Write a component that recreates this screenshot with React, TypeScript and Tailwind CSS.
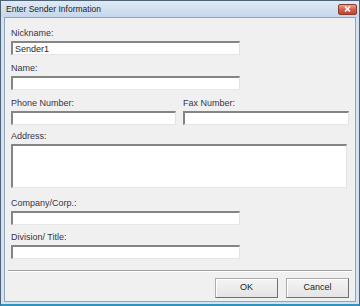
import React from "react";

const font = { fontFamily: '"Liberation Sans", Arial, sans-serif' };

function Field({ w, h = 14, value }: { w: string; h?: number; value?: string }) {
  return (
    <div
      className={`${w} bg-white border-t-2 border-l-2 border-r border-b border-t-[#858585] border-l-[#858585] border-r-[#e3e3e3] border-b-[#e6e6e6] flex items-center pl-[2px] text-[9px] leading-[10px] text-[#2a2a2a]`}
      style={{ height: h }}
    >
      {value}
    </div>
  );
}

function Label({ children }: { children: React.ReactNode }) {
  return <div className="h-[11px] leading-[11px] text-[9px] text-[#3a3346] mb-[2px]">{children}</div>;
}

function Btn({ children }: { children: React.ReactNode }) {
  return (
    <div className="w-[63px] h-[20px] flex items-center justify-center text-[9px] text-[#222] bg-gradient-to-b from-[#f4f4f4] to-[#e4e4e4] border border-[#acacac] border-r-[#6f6f6f] border-b-[#6f6f6f] shadow-[inset_1px_1px_0_#ffffff]">
      {children}
    </div>
  );
}

export default function App() {
  return (
    <div
      className="w-[360px] h-[306px] flex flex-col bg-[#d3e2f1] border border-[#4f6275] border-b-2 border-b-[#2f93bd]"
      style={font}
    >
      <div className="h-[16px] flex items-center justify-between pl-[5px] pr-[2px] bg-gradient-to-b from-[#dfeaf5] to-[#c4d7eb]">
        <span className="text-[8.5px] text-[#1f1f1f] leading-[10px]">Enter Sender Information</span>
        <div className="w-[19px] h-[11px] rounded-[2px] border border-[#8b3b2f] bg-gradient-to-b from-[#e9a08f] via-[#d2604a] to-[#c0452f] flex items-center justify-center">
          <svg width="7" height="6" viewBox="0 0 7 6">
            <path d="M1 0.5 L6 5.5 M6 0.5 L1 5.5" stroke="#ffffff" strokeWidth="1.6" />
          </svg>
        </div>
      </div>
      <div className="flex-1 mx-[3px] mb-[2px] bg-[#f0f0f0] border border-[#90a5ba] flex flex-col px-[6px]">
        <div className="mt-[10px]">
          <Label>Nickname:</Label>
          <Field w="w-[229px]" value="Sender1" />
        </div>
        <div className="mt-[8px]">
          <Label>Name:</Label>
          <Field w="w-[229px]" />
        </div>
        <div className="mt-[8px] flex gap-[7px]">
          <div>
            <Label>Phone Number:</Label>
            <Field w="w-[165px]" />
          </div>
          <div>
            <Label>Fax Number:</Label>
            <Field w="w-[166px]" />
          </div>
        </div>
        <div className="mt-[6px]">
          <Label>Address:</Label>
          <Field w="w-[336px]" h={44} />
        </div>
        <div className="mt-[10px]">
          <Label>Company/Corp.:</Label>
          <Field w="w-[229px]" />
        </div>
        <div className="mt-[7px]">
          <Label>Division/ Title:</Label>
          <Field w="w-[229px]" />
        </div>
        <div className="mt-[11px] -mx-[3px] h-[2px] border-t border-t-[#a0a0a0] border-b border-b-white" />
        <div className="mt-[6px] flex justify-end gap-[8px] pr-[0px]">
          <Btn>OK</Btn>
          <Btn>Cancel</Btn>
        </div>
      </div>
    </div>
  );
}
